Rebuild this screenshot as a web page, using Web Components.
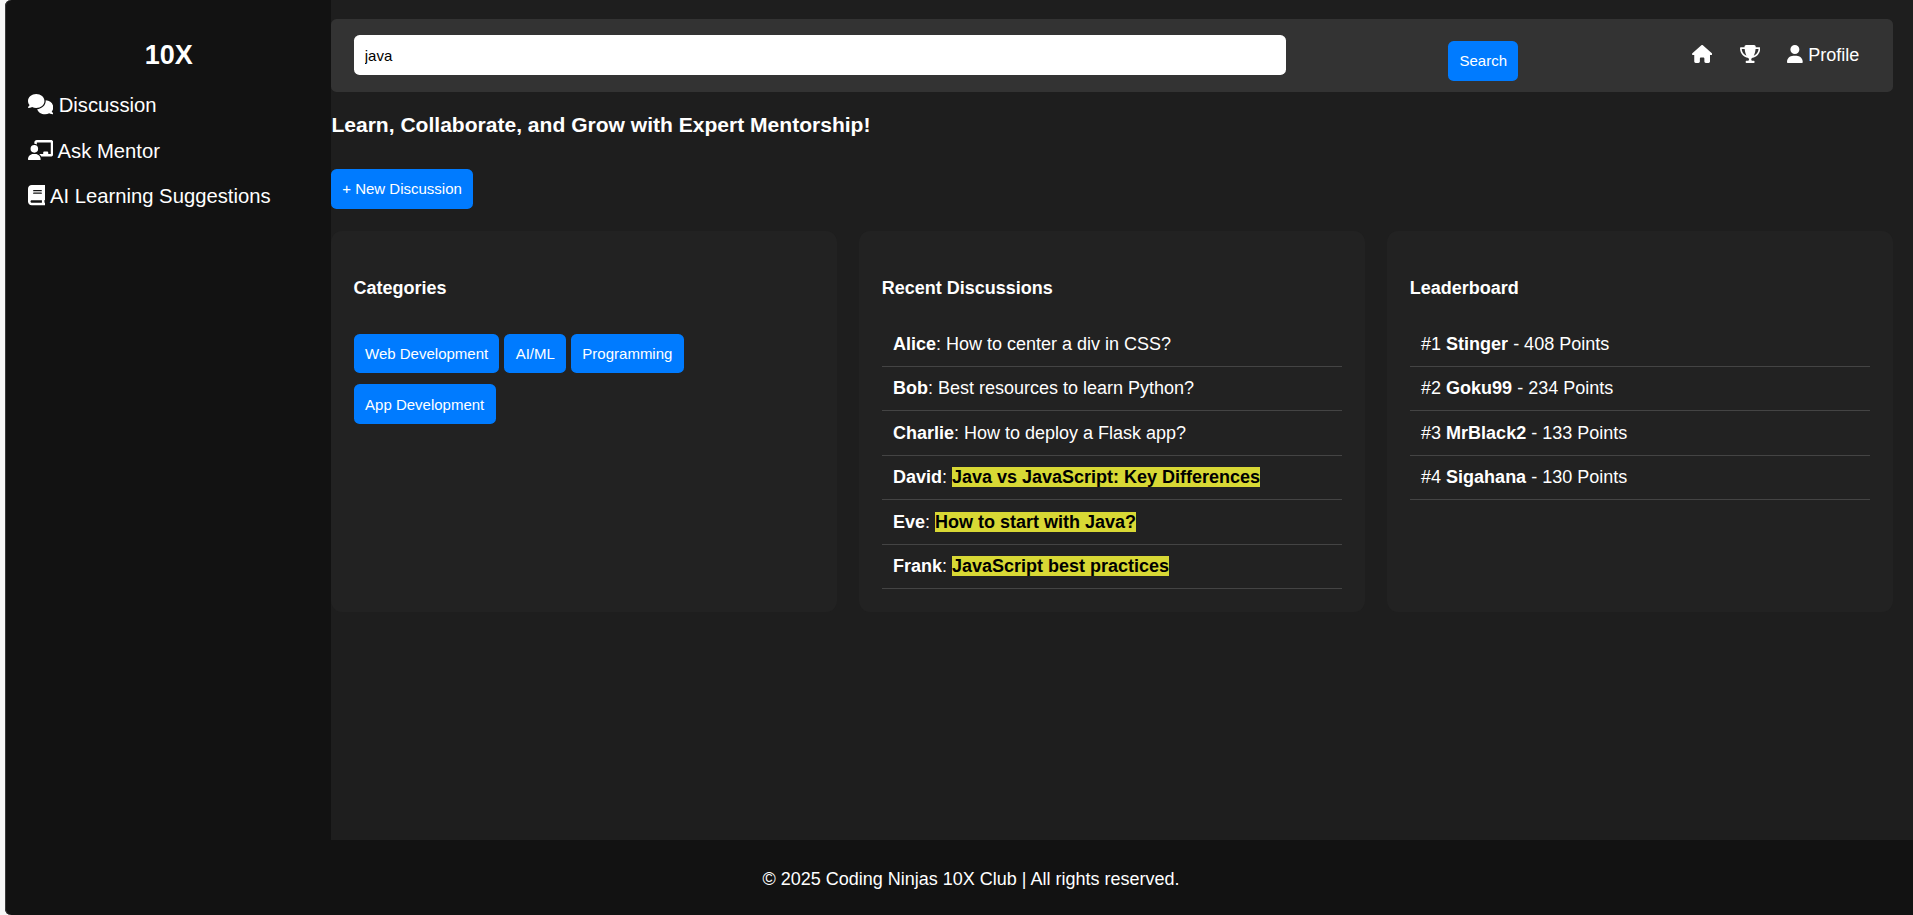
<!DOCTYPE html>
<html lang="en">
<head>
<meta charset="utf-8">
<title>10X Club</title>
<style>
html, body { margin: 0; height: 100%; }
body { background: #f7f7f7; color: #fff; font: 18px/20px "Liberation Sans", Arial, sans-serif; overflow: hidden; }
</style>
</head>
<body>
<club-app>
  <side-bar slot="side" heading="10X">
    <side-link icon="comments">Discussion</side-link>
    <side-link icon="mentor">Ask Mentor</side-link>
    <side-link icon="book">AI Learning Suggestions</side-link>
  </side-bar>
  <search-header value="java"></search-header>
  <page-intro>Learn, Collaborate, and Grow with Expert Mentorship!</page-intro>
  <action-button class="new">+ New Discussion</action-button>
  <card-grid>
    <info-card heading="Categories">
      <tag-list>
        <action-button>Web Development</action-button>
        <action-button>AI/ML</action-button>
        <action-button>Programming</action-button>
        <action-button>App Development</action-button>
      </tag-list>
    </info-card>
    <info-card heading="Recent Discussions">
      <list-row><b>Alice</b>: How to center a div in CSS?</list-row>
      <list-row><b>Bob</b>: Best resources to learn Python?</list-row>
      <list-row><b>Charlie</b>: How to deploy a Flask app?</list-row>
      <list-row><b>David</b>: <mark-text>Java vs JavaScript: Key Differences</mark-text></list-row>
      <list-row><b>Eve</b>: <mark-text>How to start with Java?</mark-text></list-row>
      <list-row><b>Frank</b>: <mark-text>JavaScript best practices</mark-text></list-row>
    </info-card>
    <info-card heading="Leaderboard">
      <list-row>#1 <b>Stinger</b> - 408 Points</list-row>
      <list-row>#2 <b>Goku99</b> - 234 Points</list-row>
      <list-row>#3 <b>MrBlack2</b> - 133 Points</list-row>
      <list-row>#4 <b>Sigahana</b> - 130 Points</list-row>
    </info-card>
  </card-grid>
  <page-footer slot="footer">© 2025 Coding Ninjas 10X Club | All rights reserved.</page-footer>
</club-app>
<script>
const ICONS = {
  home: [576, "M575.8 255.5c0 18-15 32.1-32 32.1h-32l.7 160.2c0 2.7-.2 5.4-.5 8.1V472c0 22.1-17.9 40-40 40H456c-1.1 0-2.2 0-3.3-.1c-1.4 .1-2.8 .1-4.2 .1H416 392c-22.1 0-40-17.9-40-40V448 384c0-17.7-14.3-32-32-32H256c-17.7 0-32 14.3-32 32v64 24c0 22.1-17.9 40-40 40H160 128.1c-1.5 0-3-.1-4.5-.2c-1.2 .1-2.4 .2-3.6 .2H104c-22.1 0-40-17.9-40-40V360c0-.9 0-1.9 .1-2.8V287.6H32c-18 0-32-14-32-32.1c0-9 3-17 10-24L266.4 8c7-7 15-8 22-8s15 2 21 7L564.8 231.5c8 7 12 15 11 24z"],
  trophy: [576, "M400 0H176c-26.5 0-48.1 21.8-47.1 48.2c.2 5.3 .4 10.6 .7 15.8H24C10.7 64 0 74.7 0 88c0 92.6 33.5 157 78.5 200.7c44.3 43.1 98.3 64.8 138.1 75.8c23.4 6.5 39.4 26 39.4 45.6c0 20.9-17 37.9-37.9 37.9H192c-17.7 0-32 14.3-32 32s14.3 32 32 32H384c17.7 0 32-14.3 32-32s-14.3-32-32-32H357.9C337 448 320 431 320 410.1c0-19.6 15.9-39.2 39.4-45.6c39.9-11 93.9-32.7 138.2-75.8C542.5 245 576 180.6 576 88c0-13.3-10.7-24-24-24H446.4c.3-5.2 .5-10.4 .7-15.8C448.1 21.8 426.5 0 400 0zM48.9 112h84.4c9.1 90.1 29.2 150.3 51.9 190.6c-24.9-11-50.8-26.5-73.2-48.3c-32-31.1-58-76-63-142.3zM464.1 254.3c-22.4 21.8-48.3 37.3-73.2 48.3c22.7-40.3 42.8-100.5 51.9-190.6h84.4c-5.1 66.3-31.1 111.2-63 142.3z"],
  user: [448, "M224 256A128 128 0 1 0 224 0a128 128 0 1 0 0 256zm-45.7 48C79.8 304 0 383.8 0 482.3C0 498.7 13.3 512 29.7 512H418.3c16.4 0 29.7-13.3 29.7-29.7C448 383.8 368.2 304 269.7 304H178.3z"],
  comments: [640, "M208 352c114.9 0 208-78.8 208-176S322.9 0 208 0S0 78.8 0 176c0 38.6 14.7 74.3 39.6 103.4c-3.5 9.4-8.7 17.7-14.2 24.7c-4.8 6.2-9.7 11-13.3 14.3c-1.8 1.6-3.3 2.9-4.3 3.7c-.5 .4-.9 .7-1.1 .8l-.2 .2C1 327.2-1.4 334.4 .8 340.9S9.1 352 16 352c21.8 0 43.8-5.6 62.1-12.5c9.2-3.5 17.8-7.4 25.2-11.4C134.1 343.3 169.8 352 208 352zM448 176c0 112.3-99.1 196.9-216.5 207C255.8 457.4 336.4 512 432 512c38.2 0 73.9-8.7 104.7-23.9c7.5 4 16 7.9 25.2 11.4c18.3 6.9 40.3 12.5 62.1 12.5c6.9 0 13.1-4.5 15.2-11.1c2.1-6.6-.2-13.8-5.8-17.9l-.2-.2c-.2-.2-.6-.4-1.1-.8c-1-.8-2.5-2-4.3-3.7c-3.6-3.3-8.5-8.1-13.3-14.3c-5.5-7-10.7-15.4-14.2-24.7c24.9-29 39.6-64.7 39.6-103.4c0-92.8-84.9-168.9-192.6-175.5c.4 5.1 .6 10.3 .6 15.5z"],
  mentor: [640, "M160 64c0-35.3 28.7-64 64-64H576c35.3 0 64 28.7 64 64V352c0 35.3-28.7 64-64 64H336.8c-11.8-25.5-29.9-47.5-52.4-64H384V320c0-17.7 14.3-32 32-32h64c17.7 0 32 14.3 32 32v32h64V64L224 64v49.1C205.2 102.2 183.3 96 160 96V64zm0 64a96 96 0 1 1 0 192 96 96 0 1 1 0-192zM133.3 352h53.3C260.3 352 320 411.7 320 485.3c0 14.7-11.9 26.7-26.7 26.7H26.7C11.9 512 0 500.1 0 485.3C0 411.7 59.7 352 133.3 352z"],
  book: [448, "M96 0C43 0 0 43 0 96V416c0 53 43 96 96 96H384h32c17.7 0 32-14.3 32-32s-14.3-32-32-32V384c17.7 0 32-14.3 32-32V32c0-17.7-14.3-32-32-32H384 96zm0 384H352v64H96c-17.7 0-32-14.3-32-32s14.3-32 32-32zm32-240c0-8.8 7.2-16 16-16H336c8.8 0 16 7.2 16 16s-7.2 16-16 16H144c-8.8 0-16-7.2-16-16zm16 48H336c8.8 0 16 7.2 16 16s-7.2 16-16 16H144c-8.8 0-16-7.2-16-16s7.2-16 16-16z"]
};

function define(name, css, html) {
  customElements.define(name, class extends HTMLElement {
    constructor() {
      super();
      this.attachShadow({ mode: "open" });
    }
    connectedCallback() {
      const body = typeof html === "function" ? html(this) : html;
      this.shadowRoot.innerHTML = `<style>${css}</style>${body}`;
    }
  });
}

define("fa-icon",
  `:host { display: inline-block; height: 1em; vertical-align: -0.125em; line-height: 0; }
   svg { height: 1em; display: block; fill: currentColor; }`,
  el => {
    const [w, d] = ICONS[el.getAttribute("name")];
    return `<svg viewBox="0 0 ${w} 512" style="width:${w / 512}em" aria-hidden="true"><path d="${d}"/></svg>`;
  });

define("club-app",
  `:host { display: grid; grid-template: 840px 75px / 326px 1fr; margin-left: 5px; height: 915px;
     box-sizing: border-box; background: #121212; border-radius: 6px 0 0 6px; overflow: hidden; box-shadow: inset 1px 0 #3a3a3a; }
   main { background: #1e1e1e; padding: 19px 20px 0 0; min-width: 0; }
   .footer { grid-column: 1 / -1; }`,
  `<slot name="side"></slot><main><slot></slot></main><div class="footer"><slot name="footer"></slot></div>`);

define("side-bar",
  `:host { display: block; padding: 40px 22.3px 0 22.7px; }
   h2 { margin: 0 0 24px; padding-left: 1px; font-size: 27px; line-height: 30px; text-align: center; }
   nav { display: flex; flex-direction: column; gap: 22.5px; }`,
  el => `<h2>${el.getAttribute("heading")}</h2><nav><slot></slot></nav>`);

define("side-link",
  `:host { display: block; font-size: 20.25px; line-height: 23px; height: 23px; white-space: nowrap; }`,
  el => `<fa-icon name="${el.getAttribute("icon")}"></fa-icon> <slot></slot>`);

define("action-button",
  `:host { display: inline-block; vertical-align: top; }
   :host(.new) { display: block; }
   button { display: block; border: 0; margin: 0; height: 39.5px; padding: 0 11.25px; border-radius: 5.6px; background: #007bff;
     color: #fff; font: 15px "Liberation Sans", Arial, sans-serif; }`,
  `<button><slot></slot></button>`);

define("search-header",
  `:host { display: flex; justify-content: space-between; align-items: center; height: 73px; box-sizing: border-box;
     padding: 0 22.5px; background: #333; border-radius: 5.6px; }
   input { box-sizing: border-box; width: 932.3px; height: 40px; border: 0; border-radius: 5.6px; padding: 1px 11.25px 0; margin: 0 0 1px; outline: 0;
     background: #fff; color: #000; font: 15px "Liberation Sans", Arial, sans-serif; }
   action-button { margin-top: 10.5px; }
   nav { display: flex; gap: 27.5px; margin: 0 11.25px 2px 0; padding-left: 11.25px; white-space: nowrap; }`,
  el => `<input value="${el.getAttribute("value")}"><action-button>Search</action-button>
    <nav><span><fa-icon name="home"></fa-icon></span><span><fa-icon name="trophy"></fa-icon></span><span><fa-icon name="user"></fa-icon> Profile</span></nav>`);

define("page-intro",
  `:host { display: block; padding: 21px 0 33px .4px; }
   h3 { margin: 0; font-size: 21.06px; line-height: 23px; }`,
  `<h3><slot></slot></h3>`);

define("card-grid",
  `:host { display: grid; grid-template-columns: repeat(3, minmax(0, 1fr)); gap: 22.5px; margin-top: 22.5px; height: 380.6px; }`,
  `<slot></slot>`);

define("info-card",
  `:host { display: block; background: #222; border-radius: 11.25px; padding: 0 22.5px; }
   h4 { margin: 0; padding: 47px 0 24.35px; font-size: 18px; line-height: 20px; }`,
  el => `<h4>${el.getAttribute("heading")}</h4><slot></slot>`);

define("tag-list",
  `:host { display: flex; flex-wrap: wrap; gap: 11px 5px; padding: 11.6px 0 0 .3px; }`,
  `<slot></slot>`);

define("list-row",
  `:host { display: block; box-sizing: border-box; height: 44.45px; padding: 11.6px 11.25px 0; border-bottom: 1px solid #444; white-space: nowrap; }`,
  `<slot></slot>`);

define("mark-text",
  `:host { display: inline; background: #d8d835; color: #000; font-weight: bold; }`,
  `<slot></slot>`);

define("page-footer",
  `:host { display: block; padding: 29px 0 0 24px; text-align: center; }`,
  `<slot></slot>`);
</script>
</body>
</html>
